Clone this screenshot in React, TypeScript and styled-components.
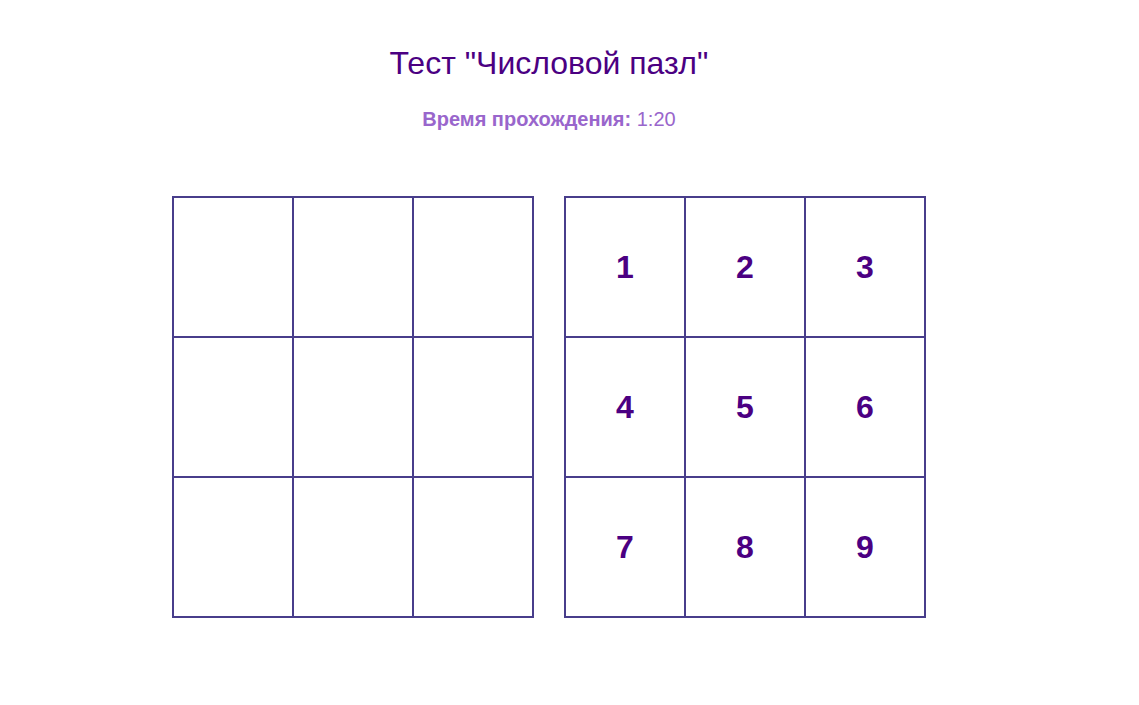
import React from "react";
import styled, { createGlobalStyle } from "styled-components";

const GlobalStyle = createGlobalStyle`
  html, body { margin: 0; padding: 0; background: #ffffff; }
  body { font-family: "Liberation Sans", Arial, sans-serif; }
`;

const Page = styled.div`
  width: 1098px;
  display: flex;
  flex-direction: column;
  align-items: center;
  padding-top: 45px;
`;

const Title = styled.h1`
  margin: 0;
  font-size: 32px;
  font-weight: 400;
  line-height: 37px;
  color: #4b0082;
`;

const Timer = styled.p`
  margin: 26px 0 0;
  font-size: 20px;
  line-height: 23px;
  color: #9966cc;
`;

const TimerLabel = styled.strong`
  font-weight: 700;
`;

const Boards = styled.div`
  display: flex;
  gap: 30px;
  margin-top: 65px;
`;

const Board = styled.div`
  display: grid;
  grid-template-columns: repeat(3, 118px);
  grid-template-rows: repeat(3, 138px);
  gap: 2px;
  padding: 2px;
  background: #483d8b;
`;

const Cell = styled.div`
  background: #ffffff;
  display: flex;
  align-items: center;
  justify-content: center;
  font-size: 32px;
  font-weight: 700;
  color: #4b0082;
`;

export default function App() {
  const nums = [1, 2, 3, 4, 5, 6, 7, 8, 9];
  return (
    <>
      <GlobalStyle />
      <Page>
        <Title>Тест "Числовой пазл"</Title>
        <Timer>
          <TimerLabel>Время прохождения:</TimerLabel> 1:20
        </Timer>
        <Boards>
          <Board>
            {nums.map((n) => (
              <Cell key={n} />
            ))}
          </Board>
          <Board>
            {nums.map((n) => (
              <Cell key={n}>{n}</Cell>
            ))}
          </Board>
        </Boards>
      </Page>
    </>
  );
}
